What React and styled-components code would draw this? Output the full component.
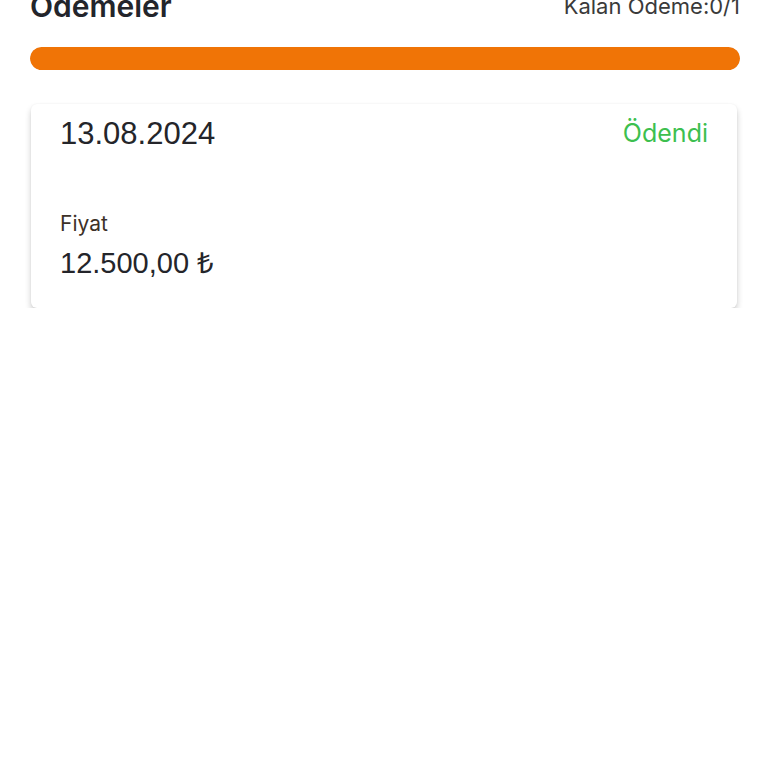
import React from 'react'
import styled, { createGlobalStyle } from 'styled-components'

const GlobalStyle = createGlobalStyle`
    html, body {
        margin: 0;
        padding: 0;
        background: #fff;
        font-family: Inter, "Noto Sans", sans-serif;
        overflow: hidden;
    }
`

const Page = styled.div`
    padding: 0 28px 0 30px;
    margin-top: -12px;
`

const Header = styled.div`
    display: flex;
    justify-content: space-between;
    align-items: flex-end;
    height: 36px;
`

const Title = styled.h1`
    margin: 0;
    font-size: 30px;
    font-weight: 600;
    color: #23252b;
    line-height: 36px;
`

const Remaining = styled.div`
    font-size: 22px;
    color: #3a3a3a;
    line-height: 30px;
    padding-bottom: 3px;
`

const Progress = styled.div`
    margin-top: 23px;
    height: 23px;
    border-radius: 12px;
    background: #eee;
    overflow: hidden;
`

const ProgressFill = styled.div`
    height: 100%;
    background: #f07406;
    border-radius: 12px;
`

const Card = styled.div`
    margin: 34px 3px 0 1px;
    background: #fff;
    border-radius: 6px;
    box-shadow: 0 4px 6px rgba(0, 0, 0, 0.2), 0 0 2px rgba(0, 0, 0, 0.05);
    padding: 12px 29px 29px 29px;
`

const CardTop = styled.div`
    display: flex;
    justify-content: space-between;
    align-items: flex-start;
`

const DateText = styled.div`
    font-family: "Liberation Sans", Arial, sans-serif;
    font-size: 31px;
    color: #24252a;
    line-height: 36px;
`

const Status = styled.div`
    margin-top: 2px;
    font-size: 25px;
    color: #3dbf4f;
    line-height: 30px;
`

const Label = styled.div`
    margin-top: 59px;
    font-size: 21px;
    color: #3d3128;
    line-height: 26px;
`

const Amount = styled.div`
    margin-top: 10px;
    font-family: "Liberation Sans", Arial, sans-serif;
    font-size: 29px;
    color: #24252a;
    line-height: 32px;
`

export default function App() {
    const paid = 1
    const total = 1
    return (
        <>
            <GlobalStyle />
            <Page>
                <Header>
                    <Title>Ödemeler</Title>
                    <Remaining>Kalan Ödeme:{total - paid}/{total}</Remaining>
                </Header>
                <Progress>
                    <ProgressFill style={{ width: `${(paid / total) * 100}%` }} />
                </Progress>
                <Card>
                    <CardTop>
                        <DateText>13.08.2024</DateText>
                        <Status>Ödendi</Status>
                    </CardTop>
                    <Label>Fiyat</Label>
                    <Amount>12.500,00 ₺</Amount>
                </Card>
            </Page>
        </>
    )
}
